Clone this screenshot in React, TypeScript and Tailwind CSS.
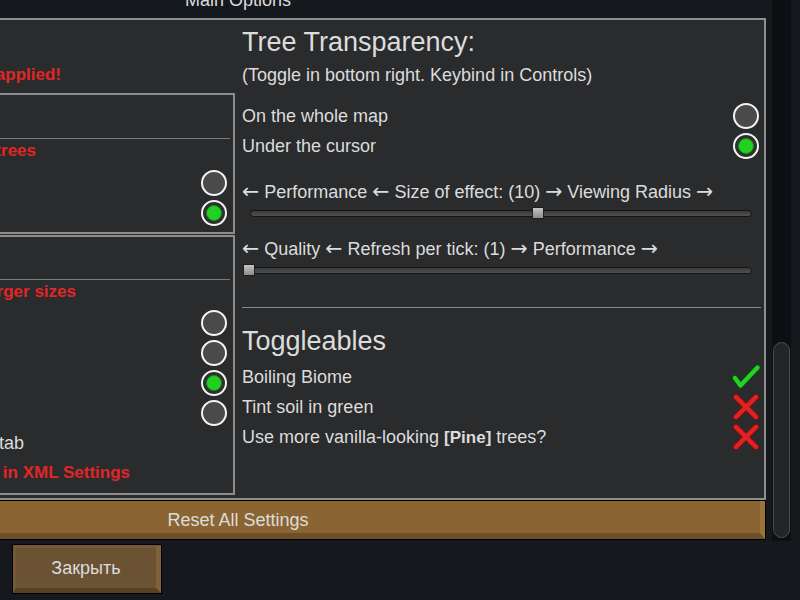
import React from "react";

function Radio({ on }: { on?: boolean }) {
  if (on) {
    return (
      <div className="w-[26px] h-[26px] rounded-full border-2 border-[#f4f4f4] bg-[#2f2f30] flex items-center justify-center">
        <div className="w-[16px] h-[16px] rounded-full bg-[#22d022] border border-[#169016]" />
      </div>
    );
  }
  return <div className="w-[26px] h-[26px] rounded-full border-2 border-[#f4f4f4] bg-[#4a4a4a]" />;
}

function Check() {
  return (
    <svg width="28" height="26" viewBox="0 0 28 26">
      <polyline points="3,14 8.5,21.5 25.5,3.5" fill="none" stroke="#0f4a0f" strokeWidth="6.5" strokeLinecap="round" strokeLinejoin="round" />
      <polyline points="3,14 8.5,21.5 25.5,3.5" fill="none" stroke="#26d026" strokeWidth="4.2" strokeLinecap="round" strokeLinejoin="round" />
    </svg>
  );
}

function Cross() {
  return (
    <svg width="28" height="26" viewBox="0 0 28 26">
      <g fill="none" strokeLinecap="round">
        <line x1="4" y1="3" x2="24" y2="23" stroke="#7a1010" strokeWidth="6.5" />
        <line x1="24" y1="3" x2="4" y2="23" stroke="#7a1010" strokeWidth="6.5" />
        <line x1="4" y1="3" x2="24" y2="23" stroke="#e02222" strokeWidth="4.4" />
        <line x1="24" y1="3" x2="4" y2="23" stroke="#e02222" strokeWidth="4.4" />
      </g>
    </svg>
  );
}

function Slider({ pct }: { pct: number }) {
  return (
    <div className="h-[14px] flex items-center pl-[8px] pr-[9px]">
      <div className="relative flex-1 h-[7px] rounded-full bg-linear-to-b from-[#3a3a3a] to-[#505050] border border-[#141414]">
        <div
          className="absolute top-1/2 w-[12px] h-[12px] -translate-y-1/2 -translate-x-1/2 bg-linear-to-b from-[#c4c4c4] to-[#8c8c8c] border border-[#1e1e1e]"
          style={{ left: `${pct}%` }}
        />
      </div>
    </div>
  );
}

function ClipText({ end, text, red, bold }: { end: number; text: React.ReactNode; red?: boolean; bold?: boolean }) {
  return (
    <div
      className={
        "h-full flex justify-end whitespace-nowrap " +
        (red ? "text-[#e02626] " : "") +
        (bold ? "font-bold text-[17px] " : "")
      }
      style={{ width: end }}
    >
      <span className="shrink-0">{text}</span>
    </div>
  );
}

function RadioRowLeft({ on }: { on?: boolean }) {
  return (
    <div className="h-[30px] flex items-center justify-end pr-[6px]">
      <Radio on={on} />
    </div>
  );
}

function L() {
  return <span className="font-['DejaVu_Sans',sans-serif] text-[20.5px]">←</span>;
}
function R() {
  return <span className="font-['DejaVu_Sans',sans-serif] text-[20.5px]">→</span>;
}

export default function App() {
  return (
    <div className="w-[800px] h-[600px] overflow-hidden bg-[#15181c] text-[#dcdcdc] font-['Liberation_Sans',Arial,sans-serif] text-[18px] flex flex-col">
      <div className="flex h-[541px]">
        <div className="w-[766px] flex flex-col">
          <div className="h-[18px] overflow-hidden">
            <div className="w-[476px] text-center leading-[20px] -mt-[10px]">Main Options</div>
          </div>
          <div className="h-[482px] border-t-2 border-r-2 border-b-2 border-[#8f8f8f] bg-[#2a2b2d] flex">
            {/* left column */}
            <div className="w-[235px] flex flex-col">
              <div className="h-[30px] leading-[30px] mt-[40px]">
                <ClipText end={61} red bold text="Restart required for changes to be applied!" />
              </div>
              <div className="h-[141px] mt-[3px] border-t-2 border-r-2 border-b-2 border-[#8c8c8c] flex flex-col">
                <div className="h-[43px]" />
                <div className="h-px bg-[#7c7c7c] mr-[3px]" />
                <div className="h-[24px] leading-[24px]">
                  <ClipText end={36} red bold text="Performance impact on trees" />
                </div>
                <div className="h-[5px]" />
                <RadioRowLeft />
                <RadioRowLeft on />
              </div>
              <div className="h-[260px] mt-px border-t-2 border-r-2 border-b-2 border-[#8c8c8c] flex flex-col">
                <div className="h-[42px]" />
                <div className="h-px bg-[#7c7c7c] mr-[3px]" />
                <div className="h-[24px] leading-[24px]">
                  <ClipText end={76} red bold text="May cause lag on larger sizes" />
                </div>
                <div className="h-[4px]" />
                <RadioRowLeft />
                <RadioRowLeft />
                <RadioRowLeft on />
                <RadioRowLeft />
                <div className="h-[30px] leading-[30px]">
                  <ClipText end={24} text="Show in the mod tab" />
                </div>
                <div className="h-[30px] leading-[30px]">
                  <ClipText end={130} red bold text="More options in XML Settings" />
                </div>
              </div>
            </div>

            {/* right column */}
            <div className="flex-1 ml-[7px] pr-[3px] flex flex-col">
              <div className="mt-[7px] h-[30px] leading-[30px] text-[27px] whitespace-nowrap">Tree Transparency:</div>
              <div className="mt-[3px] h-[30px] leading-[30px] whitespace-nowrap">(Toggle in bottom right. Keybind in Controls)</div>
              <div className="mt-[11px] h-[30px] leading-[30px] flex items-center justify-between pr-[2px]">
                <span>On the whole map</span>
                <Radio />
              </div>
              <div className="h-[30px] leading-[30px] flex items-center justify-between pr-[2px]">
                <span>Under the cursor</span>
                <Radio on />
              </div>
              <div className="mt-[15px] h-[30px] leading-[30px] whitespace-nowrap">
                <L /> Performance <L /> Size of effect: (10) <R /> Viewing Radius <R />
              </div>
              <Slider pct={57.3} />
              <div className="mt-[13px] h-[30px] leading-[30px] whitespace-nowrap">
                <L /> Quality <L /> Refresh per tick: (1) <R /> Performance <R />
              </div>
              <Slider pct={-0.4} />
              <div className="mt-[30px] h-px bg-[#8a8a8a]" />
              <div className="mt-[18px] h-[30px] leading-[30px] text-[27px]">Toggleables</div>
              <div className="mt-[6px] h-[30px] leading-[30px] flex items-center justify-between pr-px">
                <span>Boiling Biome</span>
                <Check />
              </div>
              <div className="h-[30px] leading-[30px] flex items-center justify-between pr-px">
                <span>Tint soil in green</span>
                <Cross />
              </div>
              <div className="h-[30px] leading-[30px] flex items-center justify-between pr-px">
                <span>
                  Use more vanilla-looking <b className="text-[17px]">[Pine]</b> trees?
                </span>
                <Cross />
              </div>
            </div>
          </div>
          <div className="h-[40px] border border-l-0 border-black bg-[#8a6532]">
            <div className="h-full border-r-[5px] border-r-[#98733f] border-b-[6px] border-b-[#6d5029] flex items-center">
              <div className="w-[476px] text-center leading-[20px] pt-[5px]">Reset All Settings</div>
            </div>
          </div>
        </div>
        <div className="ml-[6px] w-[19px] bg-[#0d0f12] flex flex-col justify-end pb-[3px] px-px">
          <div className="h-[196px] rounded-full bg-[#232527] border border-[#4c4e50]" />
        </div>
      </div>
      <div className="pl-[12px] pt-[3px]">
        <div className="w-[150px] h-[50px] border border-black bg-[#6b5232]">
          <div className="h-full border-t-[3px] border-l-[3px] border-t-[#75583a] border-l-[#75583a] border-r-[5px] border-r-[#7f613b] border-b-[5px] border-b-[#574124] flex items-center justify-center">
            Закрыть
          </div>
        </div>
      </div>
    </div>
  );
}
